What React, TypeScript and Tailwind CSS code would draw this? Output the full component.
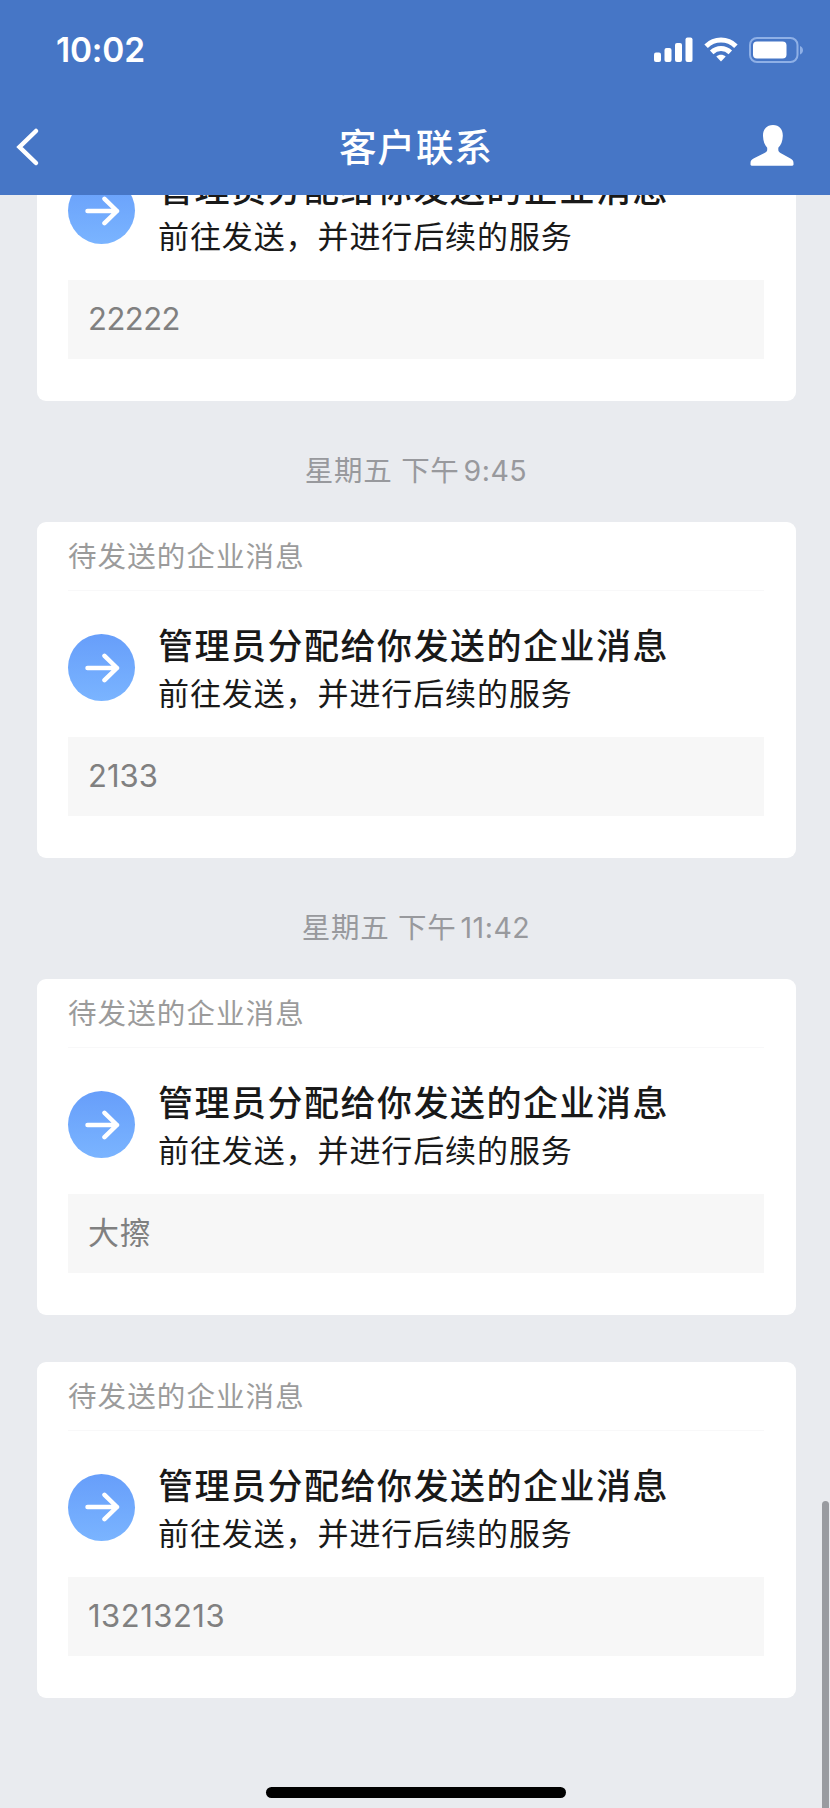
type Entry = { time?: string; clock?: string; body: string; tracking?: string };

const entries: Entry[] = [
  { body: "22222", tracking: "tracking-[-0.5px]" },
  { time: "星期五 下午", clock: "9:45", body: "2133" },
  { time: "星期五 下午", clock: "11:42", body: "大擦", tracking: "tracking-[0.7px]" },
  { body: "13213213", tracking: "tracking-[0.5px]" },
];

function SignalIcon() {
  return (
    <svg width="39" height="26" viewBox="0 0 39 26" fill="#fff">
      <rect x="0" y="15.5" width="7" height="9.5" rx="2" />
      <rect x="10.5" y="11" width="7" height="14" rx="2" />
      <rect x="21" y="6" width="7" height="19" rx="2" />
      <rect x="31.5" y="0.5" width="7" height="24.5" rx="2" />
    </svg>
  );
}

function WifiIcon() {
  return (
    <svg width="34" height="26" viewBox="0 0 34 26" fill="none" stroke="#fff" strokeWidth="5">
      <path d="M2.1 9.2C10.5 1 23.5 1 31.9 9.2" />
      <path d="M7.7 15.4C13 10.3 21 10.3 26.3 15.4" />
      <path d="M12.3 19.6C15 17.2 19 17.2 21.7 19.6L17 24.6Z" fill="#fff" stroke="none" />
    </svg>
  );
}

function BatteryIcon() {
  return (
    <svg width="55" height="26" viewBox="0 0 55 26" fill="none">
      <rect x="1" y="1" width="47.5" height="24" rx="7" stroke="#8fb0e6" strokeWidth="2" />
      <rect x="4" y="4.5" width="33.5" height="17" rx="4" fill="#fff" />
      <path d="M51 9C55 10.5 55 16 51 17.5Z" fill="#8fb0e6" />
    </svg>
  );
}

function PersonIcon() {
  return (
    <svg width="44" height="41" viewBox="0 0 44 41" fill="#fff">
      <path d="M23 0C29.5 0 33 4.5 32.800 11C32.600 16.500 31 20 28.300 22.800V24.800C28.300 26.300 29 27.200 30.500 28L40 33.200C42.500 34.600 43.500 35.800 43.500 38V39.500C43.500 40.200 43 40.700 42.300 40.700H1.700C1 40.700 .5 40.200 .5 39.500V38C.5 35.800 1.500 34.600 4 33.200L14.500 28C16.500 27 17.200 26.300 17.200 24.800V22.800C14.800 20 13.200 16.500 13 11C12.800 4.500 16.500 0 23 0Z" />
    </svg>
  );
}

function Card({ body, tracking = "" }: { body: string; tracking?: string }) {
  return (
    <section className="mr-[34.5px] ml-[36.5px] h-[336px] shrink-0 rounded-[9px] bg-white px-[31.5px]">
      <div className="flex h-[69px] items-center border-b border-[#f8f8f9] pt-[3px] text-[28.5px] tracking-[1.1px] text-[#9b9b9b]">
        待发送的企业消息
      </div>
      <div className="flex h-[146px] items-start">
        <div className="mt-[43px] flex size-[67px] items-center justify-center rounded-full bg-linear-to-b from-[#679efa] to-[#7ab4ff]">
          <svg width="36" height="34" viewBox="0 0 36 34" fill="none" stroke="#fff" strokeWidth="4.5" strokeLinecap="round" strokeLinejoin="round">
            <path d="M3.5 17H33M20.5 4.800L33 17L20.500 29.200" />
          </svg>
        </div>
        <div className="mt-[32px] ml-[23px] text-[#191919]">
          <h2 className="text-[35px] leading-[47px] font-medium tracking-[1.5px]">管理员分配给你发送的企业消息</h2>
          <p className="text-[31px] leading-[48px] tracking-[0.9px]">前往发送，并进行后续的服务</p>
        </div>
      </div>
      <div className={`flex h-[79px] items-center bg-[#f7f7f7] px-[20px] text-[31px] text-[#808080] ${tracking}`}>{body}</div>
    </section>
  );
}

export default function App() {
  return (
    <div className="relative flex h-[1808px] w-[830px] flex-col overflow-hidden bg-[#e9ebef] font-['Inter','Noto_Sans_CJK_SC',sans-serif]">
      <header className="relative z-10 h-[195px] shrink-0 bg-[#4676c6] text-white">
        <div className="flex h-[99px] items-center pr-[26px] pl-[56px]">
          <span className="flex-1 pt-[2px] text-[33.5px] font-semibold tracking-[-0.2px]">10:02</span>
          <SignalIcon />
          <span className="w-[11px]" />
          <WifiIcon />
          <span className="w-[11px]" />
          <BatteryIcon />
        </div>
        <div className="grid h-[96px] grid-cols-[1fr_auto_1fr] items-center">
          <svg className="ml-[15px]" width="26" height="40" viewBox="0 0 26 40" fill="none" stroke="#fff" strokeWidth="4.5" strokeLinecap="round">
            <path d="M21 4L4.5 20L21 36" />
          </svg>
          <h1 className="pt-[2px] pl-[2px] text-[37.5px] font-medium tracking-[1px]">客户联系</h1>
          <div className="mr-[36px] justify-self-end pb-[3px]">
            <PersonIcon />
          </div>
        </div>
      </header>
      <main className="-mt-[130px] flex flex-col">
        {entries.map((e, i) => (
          <div key={i} className="flex flex-col">
            {e.time ? (
              <div className="flex h-[121px] items-center justify-center pt-[20px] pl-[2px] text-[28.5px] text-[#98999d]">
                <span className="tracking-[0.7px]">{e.time}</span>
                <span className="ml-[4px] tracking-[0.5px]">{e.clock}</span>
              </div>
            ) : (
              i > 0 && <div className="h-[46.5px]" />
            )}
            <Card body={e.body} tracking={e.tracking} />
          </div>
        ))}
      </main>
      <div className="absolute right-[1px] bottom-0 h-[307px] w-[7px] rounded-t-full bg-[#999ba0]" />
      <div className="absolute bottom-[10px] left-[266px] h-[11px] w-[300px] rounded-full bg-black" />
    </div>
  );
}
